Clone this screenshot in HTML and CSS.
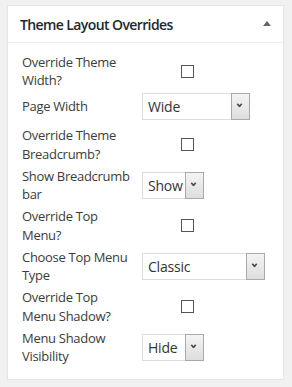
FILE: index.html
```html
<!DOCTYPE html>
<html>
<head>
<meta charset="utf-8">
<link rel="stylesheet" href="styles.css">
</head>
<body>
<div class="panel">
  <div class="panel-head">
    <h2 class="title">Theme Layout Overrides</h2>
    <span class="toggle"></span>
  </div>
  <div class="panel-body">
    <div class="row">
      <div class="label">Override Theme<br>Width?</div>
      <div class="control"><span class="check"></span></div>
    </div>
    <div class="row single">
      <div class="label">Page Width</div>
      <div class="control"><div class="select w-wide"><span class="val">Wide</span><span class="arrow"></span></div></div>
    </div>
    <div class="row">
      <div class="label">Override Theme<br>Breadcrumb?</div>
      <div class="control"><span class="check"></span></div>
    </div>
    <div class="row">
      <div class="label">Show Breadcrumb<br>bar</div>
      <div class="control"><div class="select w-short"><span class="val">Show</span><span class="arrow"></span></div></div>
    </div>
    <div class="row">
      <div class="label">Override Top<br>Menu?</div>
      <div class="control"><span class="check"></span></div>
    </div>
    <div class="row">
      <div class="label">Choose Top Menu<br>Type</div>
      <div class="control"><div class="select w-long"><span class="val">Classic</span><span class="arrow"></span></div></div>
    </div>
    <div class="row">
      <div class="label">Override Top<br>Menu Shadow?</div>
      <div class="control"><span class="check"></span></div>
    </div>
    <div class="row">
      <div class="label">Menu Shadow<br>Visibility</div>
      <div class="control"><div class="select w-short"><span class="val">Hide</span><span class="arrow"></span></div></div>
    </div>
  </div>
</div>
</body>
</html>
```

FILE: styles.css
```css
html, body {
  margin: 0;
  padding: 0;
  background: #f1f1f1;
}
body {
  padding: 5px 8px 0 7px;
  font-family: "Open Sans", "Noto Sans", sans-serif;
  color: #444;
}
.panel {
  background: #fff;
  border: 1px solid #e5e5e5;
  box-shadow: 0 1px 1px rgba(0,0,0,0.04);
  width: 275px;
}
.panel-head {
  height: 36px;
  border-bottom: 1px solid #eee;
  display: flex;
  align-items: center;
  justify-content: space-between;
  padding: 0 12px 0 12px;
}
.title {
  margin: 0;
  font-size: 14px;
  font-weight: 600;
  color: #23282d;
  letter-spacing: -0.6px;
  padding-top: 1px;
}
.toggle {
  width: 0;
  height: 0;
  border-left: 4px solid transparent;
  border-right: 4px solid transparent;
  border-bottom: 5px solid #666;
  margin-top: -2px;
}
.panel-body {
  padding: 8.5px 0 11px 14px;
}
.row {
  display: flex;
  align-items: center;
  padding: 1px 0 2.5px;
}
.row.single {
  padding: 1px 0 5px;
}
.label {
  width: 120px;
  flex: none;
  font-size: 13px;
  line-height: 18.5px;
  color: #3c3c3c;
  letter-spacing: -0.3px;
}
.control {
  display: flex;
  align-items: center;
}
.check {
  display: block;
  width: 11px;
  height: 11px;
  border: 1px solid #555;
  background: #fff;
  margin-left: 39px;
}
.select {
  display: flex;
  align-items: stretch;
  height: 27px;
  box-sizing: border-box;
  border: 1px solid #ddd;
  background: #fff;
}
.w-wide { width: 108px; }
.w-short { width: 62px; }
.w-long { width: 123px; }
.val {
  flex: 1;
  padding-left: 5px;
  font-size: 14px;
  line-height: 25px;
  color: #333;
  letter-spacing: -0.2px;
}
.arrow {
  width: 17px;
  flex: none;
  margin: -1px -1px -1px 0;
  border: 1px solid #a9a9a9;
  background: linear-gradient(#f4f4f4, #dedede);
  position: relative;
}
.arrow::after {
  content: "";
  position: absolute;
  left: 5px;
  top: 8px;
  width: 5px;
  height: 5px;
  border-right: 2px solid #4a4a4a;
  border-bottom: 2px solid #4a4a4a;
  transform: rotate(45deg) scale(0.8);
  box-sizing: border-box;
}
```
